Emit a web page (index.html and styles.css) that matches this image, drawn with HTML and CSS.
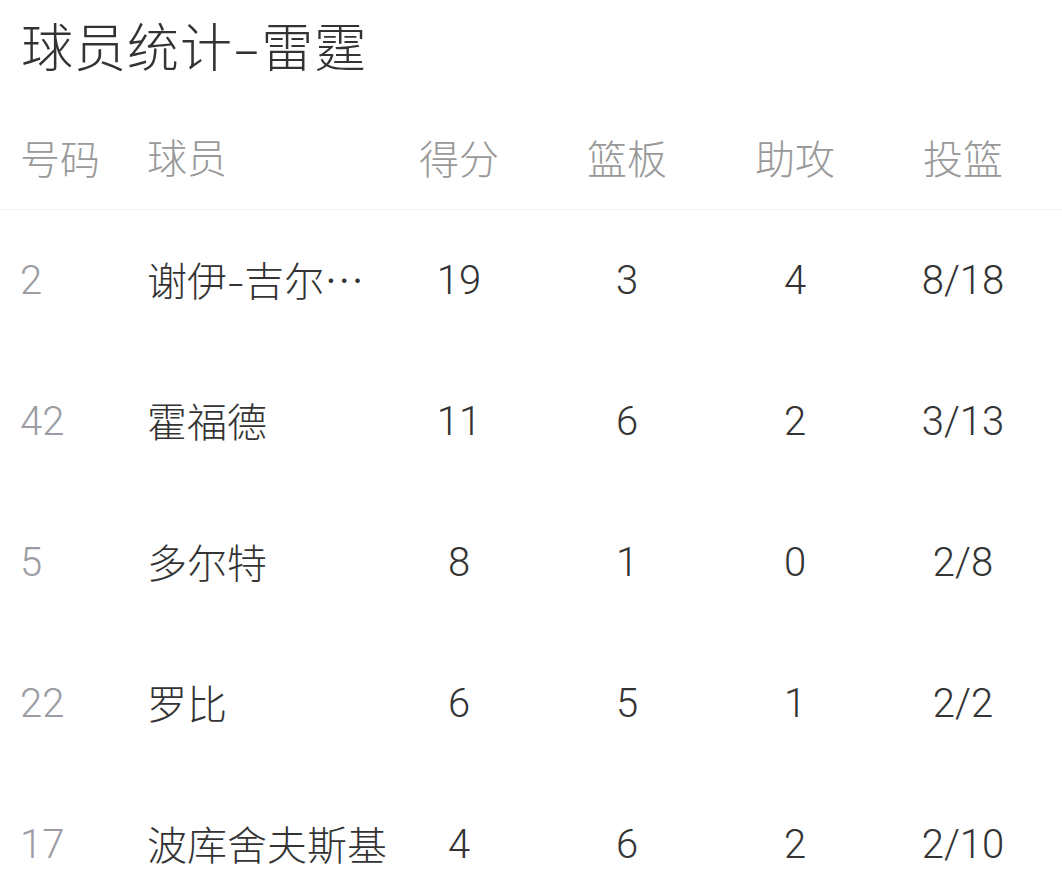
FILE: index.html
```html
<!DOCTYPE html>
<html lang="zh-CN">
<head>
<meta charset="utf-8">
<title>球员统计-雷霆</title>
<link rel="stylesheet" href="styles.css">
</head>
<body>
<div class="page">
  <h1 class="title">球员统计<span class="dash">-</span>雷霆</h1>
  <div class="table">
    <div class="row head">
      <div class="c num">号码</div>
      <div class="c name">球员</div>
      <div class="c stat">得分</div>
      <div class="c stat">篮板</div>
      <div class="c stat">助攻</div>
      <div class="c stat">投篮</div>
    </div>
    <div class="row">
      <div class="c num">2</div>
      <div class="c name">谢伊<span class="ndash">-</span>吉尔…</div>
      <div class="c stat">19</div>
      <div class="c stat">3</div>
      <div class="c stat">4</div>
      <div class="c stat">8/18</div>
    </div>
    <div class="row">
      <div class="c num">42</div>
      <div class="c name">霍福德</div>
      <div class="c stat">11</div>
      <div class="c stat">6</div>
      <div class="c stat">2</div>
      <div class="c stat">3/13</div>
    </div>
    <div class="row">
      <div class="c num">5</div>
      <div class="c name">多尔特</div>
      <div class="c stat">8</div>
      <div class="c stat">1</div>
      <div class="c stat">0</div>
      <div class="c stat">2/8</div>
    </div>
    <div class="row">
      <div class="c num">22</div>
      <div class="c name">罗比</div>
      <div class="c stat">6</div>
      <div class="c stat">5</div>
      <div class="c stat">1</div>
      <div class="c stat">2/2</div>
    </div>
    <div class="row">
      <div class="c num">17</div>
      <div class="c name">波库舍夫斯基</div>
      <div class="c stat">4</div>
      <div class="c stat">6</div>
      <div class="c stat">2</div>
      <div class="c stat">2/10</div>
    </div>
  </div>
</div>
</body>
</html>
```
FILE: styles.css
```css
html, body {
  margin: 0;
  padding: 0;
  background: #ffffff;
}
body {
  font-family: Roboto, "Noto Sans CJK SC", sans-serif;
  color: #333333;
}
.page {
  width: 1062px;
}
.title {
  margin: 0;
  padding: 15px 0 30px 21px;
  font-family: "Noto Sans CJK SC", sans-serif;
  font-size: 52px;
  line-height: 60px;
  font-weight: 300;
  letter-spacing: 1px;
  color: #333333;
}
.dash {
  display: inline-block;
  transform: scaleX(1.6);
  margin: 0 5px;
}
.ndash {
  display: inline-block;
  transform: scaleX(1.3);
  margin: 0 2px;
}
.row {
  display: grid;
  grid-template-columns: 127px 228px 168px 168px 168px 168px;
  padding-left: 20px;
  align-items: center;
  height: 141px;
  font-size: 40px;
  line-height: 48px;
  font-weight: 300;
}
.row.head {
  height: 104px;
  border-bottom: 1px solid #f2f2f2;
  color: #999999;
  font-family: "Noto Sans CJK SC", sans-serif;
}
.c {
  white-space: nowrap;
}
.name {
  font-family: "Noto Sans CJK SC", sans-serif;
  margin-top: -3px;
}
.num {
  color: #9b9da3;
}
.head .num {
  color: #999999;
}
.stat {
  text-align: center;
}
```
